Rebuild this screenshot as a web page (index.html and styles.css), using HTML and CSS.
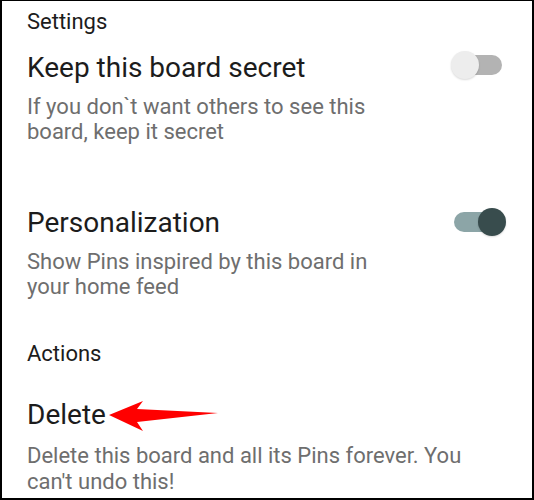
FILE: index.html
```html
<!DOCTYPE html>
<html lang="en">
<head>
  <meta charset="UTF-8" />
  <title>Board settings</title>
  <link rel="stylesheet" href="styles.css">
</head>
<body>
  <div class="screen">
    <h2 class="section">Settings</h2>

    <div class="option">
      <div class="option-row">
        <h3 class="title">Keep this board secret</h3>
        <span class="switch"><span class="knob"></span></span>
      </div>
      <p class="desc">If you don`t want others to see this<br>board, keep it secret</p>
    </div>

    <div class="option personal">
      <div class="option-row">
        <h3 class="title">Personalization</h3>
        <span class="switch on"><span class="knob"></span></span>
      </div>
      <p class="desc">Show Pins inspired by this board in<br>your home feed</p>
    </div>

    <h2 class="section actions">Actions</h2>

    <div class="option delete">
      <div class="option-row">
        <h3 class="title">Delete</h3>
        <!-- annotation arrow -->
        <svg class="arrow" width="120" height="36" viewBox="0 0 120 36">
          <path d="M3 16 L37 2 L31 10 L112 14 L31 23 L37 32 Z" fill="#f00"/>
        </svg>
      </div>
      <p class="desc">Delete this board and all its Pins forever. You<br>can't undo this!</p>
    </div>
  </div>
</body>
</html>
```

FILE: styles.css
```css
body {
  margin: 0;
  background: #fff;
  font-family: Roboto, "Noto Sans", sans-serif;
}
.screen {
  width: 534px;
  height: 500px;
  box-sizing: border-box;
  border: 2px solid #000;
  border-top-width: 1px;
  padding: 8px 30px 0 25px;
  overflow: hidden;
}
.section {
  margin: 0;
  font-size: 22px;
  line-height: 25px;
  font-weight: 400;
  color: #1c1c1c;
}
.option {
  margin-top: 17px;
}
.option-row {
  position: relative;
  display: flex;
  align-items: center;
  justify-content: space-between;
}
.title {
  margin: 0;
  font-size: 28px;
  line-height: 34px;
  font-weight: 400;
  color: #1c1c1c;
}
.desc {
  margin: 9px 0 0;
  font-size: 22px;
  line-height: 25px;
  color: #6e6e6e;
}
.personal {
  margin-top: 62px;
}
.actions {
  margin-top: 42px;
}
.delete {
  margin-top: 32px;
}
.delete .desc {
  margin-top: 11px;
  line-height: 26px;
}
.switch {
  position: relative;
  width: 48px;
  height: 20px;
  border-radius: 10px;
  background: #b3b3b3;
  margin-top: -6px;
}
.switch .knob {
  position: absolute;
  top: -4px;
  left: -3px;
  width: 28px;
  height: 28px;
  border-radius: 50%;
  background: #ededed;
  box-shadow: 0 1px 2px rgba(0,0,0,0.15);
}
.switch.on {
  background: #8ca5a7;
  margin-top: -2px;
}
.switch.on .knob {
  left: auto;
  right: -4px;
  background: #384c4d;
}
.arrow {
  position: absolute;
  left: 79px;
  top: 1px;
}
```
